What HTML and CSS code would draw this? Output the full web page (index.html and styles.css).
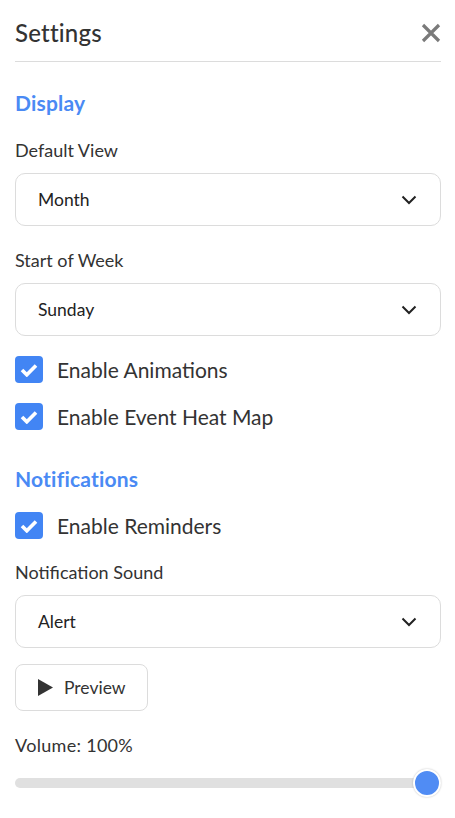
FILE: index.html
```html
<!DOCTYPE html>
<html lang="en">
<head>
    <meta charset="UTF-8">
    <meta name="viewport" content="width=device-width, initial-scale=1.0">
    <title>Settings</title>
    <link rel="stylesheet" href="styles.css">
</head>
<body>
    <div class="settings-panel">
        <div class="panel-header">
            <h1>Settings</h1>
            <button class="close-btn" aria-label="Close">
                <svg width="20" height="20" viewBox="0 0 20 20">
                    <path d="M2 2 L18 18 M18 2 L2 18" stroke="#7a7a7a" stroke-width="3.2" stroke-linecap="butt"/>
                </svg>
            </button>
        </div>

        <h2 class="section-title first">Display</h2>

        <label class="field-label">Default View</label>
        <div class="select-box">
            <span>Month</span>
            <svg class="chevron" width="16" height="10" viewBox="0 0 16 10">
                <path d="M1.5 1.5 L8 8 L14.5 1.5" fill="none" stroke="#222" stroke-width="2"/>
            </svg>
        </div>

        <label class="field-label">Start of Week</label>
        <div class="select-box">
            <span>Sunday</span>
            <svg class="chevron" width="16" height="10" viewBox="0 0 16 10">
                <path d="M1.5 1.5 L8 8 L14.5 1.5" fill="none" stroke="#222" stroke-width="2"/>
            </svg>
        </div>

        <div class="check-row first-check">
            <span class="checkbox">
                <svg width="18" height="14" viewBox="0 0 18 14">
                    <path d="M2 7 L6.8 11.8 L16 2.5" fill="none" stroke="#fff" stroke-width="3.6"/>
                </svg>
            </span>
            <span>Enable Animations</span>
        </div>
        <div class="check-row">
            <span class="checkbox">
                <svg width="18" height="14" viewBox="0 0 18 14">
                    <path d="M2 7 L6.8 11.8 L16 2.5" fill="none" stroke="#fff" stroke-width="3.6"/>
                </svg>
            </span>
            <span>Enable Event Heat Map</span>
        </div>

        <h2 class="section-title">Notifications</h2>

        <div class="check-row after-title">
            <span class="checkbox">
                <svg width="18" height="14" viewBox="0 0 18 14">
                    <path d="M2 7 L6.8 11.8 L16 2.5" fill="none" stroke="#fff" stroke-width="3.6"/>
                </svg>
            </span>
            <span>Enable Reminders</span>
        </div>

        <label class="field-label">Notification Sound</label>
        <div class="select-box">
            <span>Alert</span>
            <svg class="chevron" width="16" height="10" viewBox="0 0 16 10">
                <path d="M1.5 1.5 L8 8 L14.5 1.5" fill="none" stroke="#222" stroke-width="2"/>
            </svg>
        </div>

        <button class="preview-btn">
            <svg width="15" height="17" viewBox="0 0 15 17">
                <path d="M0 0 L15 8.5 L0 17 Z" fill="#333"/>
            </svg>
            <span>Preview</span>
        </button>

        <label class="field-label volume-label">Volume: 100%</label>
        <input class="volume" type="range" min="0" max="100" value="100">
    </div>
</body>
</html>
```

FILE: styles.css
```css
* {
    margin: 0;
    padding: 0;
    box-sizing: border-box;
    font-family: 'Lato', 'Open Sans', sans-serif;
}

body {
    background: #fff;
    color: #333;
}

.settings-panel {
    display: flex;
    flex-direction: column;
    padding: 20px 14px 20px 15px;
}

.panel-header {
    display: flex;
    justify-content: space-between;
    align-items: center;
    padding-bottom: 15px;
    border-bottom: 1px solid #dcdcdc;
}

.panel-header h1 {
    font-size: 24px;
    font-weight: 500;
    line-height: 26px;
    letter-spacing: 0.2px;
    color: #333;
}

.close-btn {
    border: none;
    background: none;
    display: flex;
    cursor: pointer;
}

.section-title {
    font-size: 21px;
    font-weight: 700;
    line-height: 24px;
    letter-spacing: 0.2px;
    color: #4a8af4;
    margin-top: 37px;
}

.section-title.first {
    margin-top: 29px;
}

.field-label {
    font-size: 18px;
    line-height: 20px;
    color: #333;
    margin-top: 24px;
}

.section-title + .field-label {
    margin-top: 25px;
}

.select-box {
    display: flex;
    justify-content: space-between;
    align-items: center;
    height: 53px;
    margin-top: 13px;
    padding: 0 23px 0 22px;
    border: 1px solid #dcdcdc;
    border-radius: 10px;
    font-size: 17.5px;
    color: #222;
}

.check-row {
    display: flex;
    align-items: center;
    gap: 14px;
    margin-top: 20px;
    font-size: 21px;
    line-height: 27px;
    color: #333;
}

.check-row.first-check {
    margin-top: 20px;
}

.check-row.after-title {
    margin-top: 21px;
}

.checkbox {
    width: 28px;
    height: 27px;
    border-radius: 4px;
    background: #4285f4;
    display: flex;
    align-items: center;
    justify-content: center;
}

.check-row + .field-label {
    margin-top: 23px;
}

.preview-btn {
    align-self: flex-start;
    display: flex;
    align-items: center;
    gap: 11px;
    height: 47px;
    margin-top: 16px;
    padding: 0 21px 0 22px;
    border: 1px solid #dcdcdc;
    border-radius: 8px;
    background: #fff;
    font-size: 17.5px;
    color: #333;
    cursor: pointer;
}

.volume-label {
    margin-top: 24px;
    letter-spacing: 0.3px;
}

.volume {
    -webkit-appearance: none;
    appearance: none;
    width: 100%;
    height: 28px;
    margin-top: 14px;
    background: transparent;
}

.volume::-webkit-slider-runnable-track {
    height: 10px;
    border-radius: 5px;
    background: #e0e0e0;
}

.volume::-webkit-slider-thumb {
    -webkit-appearance: none;
    width: 28px;
    height: 28px;
    margin-top: -9px;
    border-radius: 50%;
    background: #508cf4;
    border: 2px solid #fff;
    box-shadow: 0 0 2px rgba(0, 0, 0, 0.25);
}
```
